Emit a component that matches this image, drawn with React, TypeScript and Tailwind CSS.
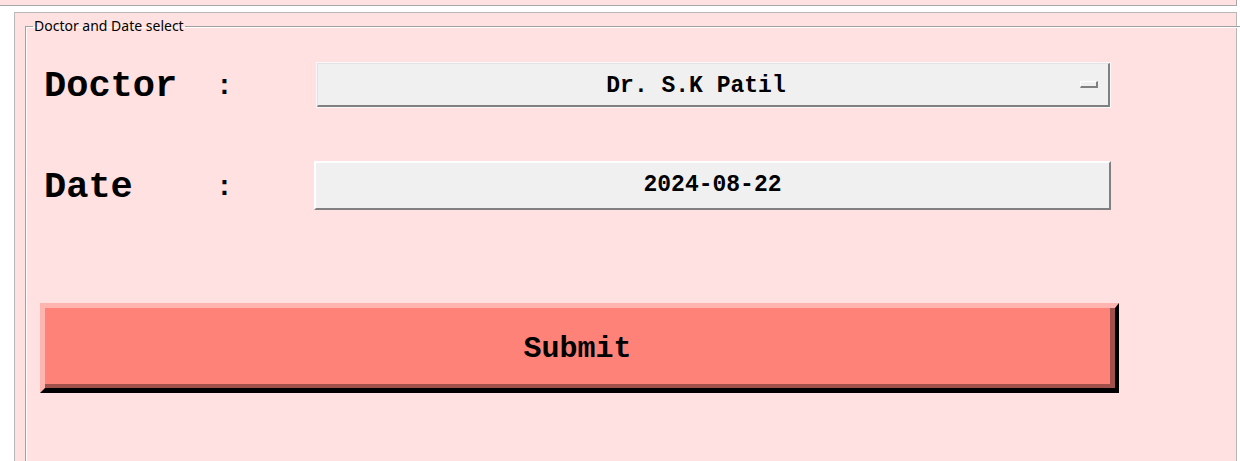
// Appointment form - Doctor and Date select
import React from "react"

const mono = "font-['Liberation_Mono','DejaVu_Sans_Mono',monospace] font-bold text-black"

// Label + colon cell
const FieldLabel = ({ text }: { text: string }) => (
    <>
        <div className={`${mono} w-[172px] text-[37px] leading-none mt-[3px]`}>{text}</div>
        <div className={`${mono} w-[100px] text-[28px] leading-none mt-[4px]`}>:</div>
    </>
)

// Tk style combobox
const Combo = ({ value }: { value: string }) => (
    <div className="w-[795px] h-[46px] bg-[#f8f8f8] p-[1px]">
        <div className="h-full flex items-center bg-[#f0f0f0] border-t border-l border-[#e3e3e3] border-b-2 border-r-2 border-b-[#808080] border-r-[#808080]">
            <div className={`${mono} flex-1 text-center text-[23px] leading-none mt-[3px]`}>{value}</div>
            <div className="w-[34px] flex items-center">
                <div className="ml-[6px] w-[18px] h-[7px] bg-[#f0f0f0] border-t border-l border-white border-b-2 border-r-2 border-b-[#808080] border-r-[#808080]" />
            </div>
        </div>
    </div>
)

// Tk style entry
const Entry = ({ value }: { value: string }) => (
    <div className="w-[797px] h-[49px] flex items-center justify-center bg-[#f0f0f0] border-t-2 border-l-2 border-white border-b-2 border-r-2 border-b-[#808080] border-r-[#808080]">
        <span className={`${mono} text-[23px] leading-none`}>{value}</span>
    </div>
)

export default function App() {
    return (
        <div className="w-[1240px] h-[461px] bg-white overflow-hidden">
            {/* Top strip */}
            <div className="w-[1237px] h-[6px] bg-[#ffe1e1] border-b border-r border-[#a8a8a8]" />

            {/* Outer frame */}
            <div className="ml-[14px] mt-[6px] w-[1223px] h-[460px] bg-[#ffe1e1] border-t border-l border-r border-[#b8b8b8]">
                <fieldset className="ml-[10px] mt-[5px] w-[1230px] h-[460px] border border-[#a0a0a0] shadow-[inset_1px_1px_0_#ffffff]">
                    <legend className="ml-[7px] px-[1px] text-[14px] leading-[16px] text-black font-['Noto_Sans','Open_Sans',sans-serif]">
                        Doctor and Date select
                    </legend>

                    <div className="pl-[18px] pt-[28px]">
                        {/* Doctor row */}
                        <div className="flex items-center">
                            <FieldLabel text="Doctor" />
                            <Combo value="Dr. S.K Patil" />
                        </div>

                        {/* Date row */}
                        <div className="flex items-center mt-[53px]">
                            <FieldLabel text="Date" />
                            <div className="-ml-[2px]">
                                <Entry value="2024-08-22" />
                            </div>
                        </div>
                    </div>

                    {/* Submit */}
                    <div className="ml-[14px] mt-[93px] w-[1079px] h-[90px] border-t-[5px] border-l-[5px] border-[#ffb5af] border-b-[5px] border-r-[4px] border-b-black border-r-black">
                        <div className="h-full flex items-center justify-center bg-[#ff8279] border-b-[4px] border-r-[5px] border-[#a0514b] pt-[6px]">
                            <span className={`${mono} text-[30px] leading-none`}>Submit</span>
                        </div>
                    </div>
                </fieldset>
            </div>
        </div>
    )
}
